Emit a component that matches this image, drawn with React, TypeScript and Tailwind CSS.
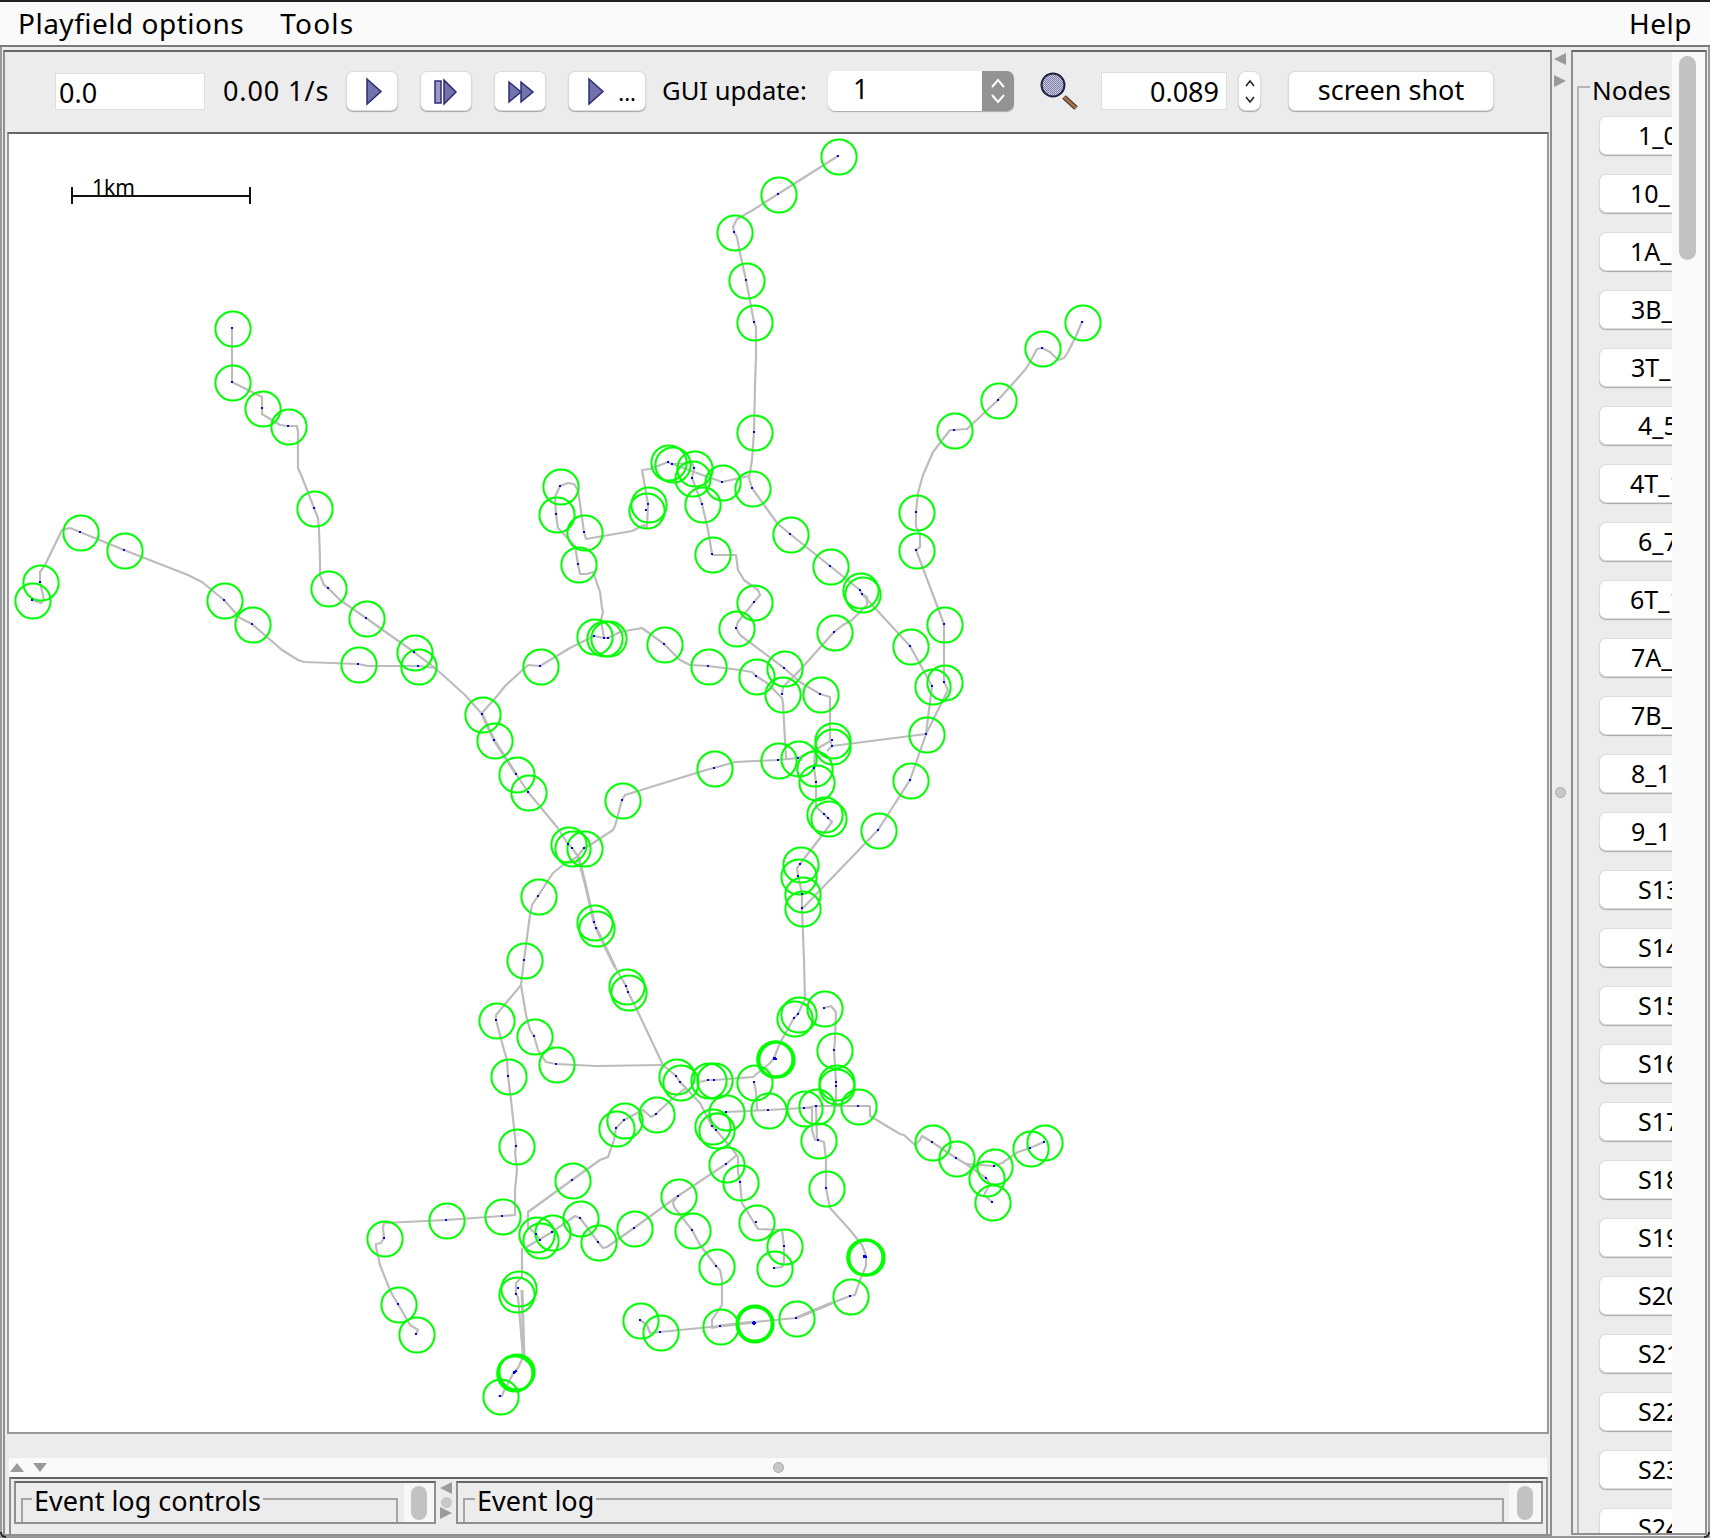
import React from "react";

const FONT = { fontFamily: '"Noto Sans", "Open Sans", sans-serif' } as const;

const nodes: [number, number][] = [
  [838,156],[778,194],[734,232],[746,280],[754,322],[754,432],[752,488],[722,482],[694,468],[692,478],[702,504],
  [916,512],[954,430],[998,400],[1042,348],[1082,322],[560,486],[556,514],[584,532],[578,564],[648,504],[646,510],
  [668,462],[672,464],[790,534],[830,566],[860,590],[862,594],[916,550],[712,554],[754,602],[736,628],[594,636],
  [604,638],[608,638],[540,666],[664,644],[708,666],[756,676],[784,668],[782,694],[820,694],[834,632],[910,646],
  [944,624],[932,686],[944,682],[926,734],[482,714],[494,740],[714,768],[778,760],[798,758],[832,740],[832,746],
  [814,768],[816,782],[824,814],[828,818],[910,780],[878,830],[800,864],[798,876],[802,894],[802,908],
  [232,328],[232,382],[262,408],[288,426],[314,508],[328,588],[366,618],[414,652],[418,666],[358,664],[80,532],
  [124,550],[40,582],[32,600],[224,600],[252,624],[516,774],[528,792],[568,844],[572,848],[584,848],[622,800],
  [538,896],[524,960],[594,922],[596,928],[626,986],[628,992],[496,1020],[534,1036],[556,1064],[508,1076],
  [676,1076],[680,1082],[708,1080],[714,1080],[754,1082],[774,1058],[775,1058],[774,1059],[776,1059],[794,1018],[798,1014],
  [824,1008],[834,1050],[836,1082],[836,1086],[858,1106],[816,1106],[804,1108],[768,1110],[726,1112],[712,1126],
  [716,1130],[818,1140],[656,1114],[624,1120],[616,1128],[516,1146],[572,1180],[726,1164],[740,1182],[678,1196],
  [826,1188],[502,1216],[580,1218],[552,1232],[536,1234],[540,1240],[598,1242],[634,1228],[692,1230],[756,1222],
  [784,1246],[774,1268],[716,1266],[864,1256],[865,1256],[864,1257],[866,1257],[518,1288],[516,1294],[850,1296],[446,1220],[384,1238],
  [398,1304],[416,1334],[514,1372],[515,1372],[514,1373],[516,1371],[500,1396],[640,1320],[660,1332],[720,1326],[754,1322],[755,1323],
  [754,1324],[753,1323],[796,1318],[932,1142],[956,1158],[994,1166],[986,1178],[992,1202],[1030,1148],[1044,1142],
];

const paths: number[][] = [
  [838,156,778,194,753,210,737,219,733,227,734,232,737,237,740,253,746,280,754,322,756,327,756,357,755,385,754,432,752,460,749,478,752,488,777,523,790,534,830,566,860,590,862,594,910,646,932,686,926,734],
  [1082,322,1076,336,1068,352,1064,358,1058,360,1050,352,1042,348,1037,349,1030,362,1025,370,998,400,967,429,954,430,950,430,933,452,923,475,918,493,916,512,916,527,920,533,920,547,916,550,944,624,944,682,948,690,926,734,910,780,878,830,803,908],
  [232,328,232,382,258,395,262,397,262,414,280,425,288,426,297,426,298,432,298,468,302,477,314,508,318,518,319,530,320,560,320,575,324,585,328,588,340,600,366,618,380,628,414,652,435,668,465,695,482,714,494,740,516,774,528,792,557,827,568,844,572,848,577,855,585,883,594,922,596,928,615,967,626,986,628,992,637,1010,663,1065,676,1076,680,1082,700,1103,712,1126,716,1130,733,1150,738,1157,738,1173,740,1182,742,1203,758,1229,782,1230,784,1246,784,1262,782,1267,774,1268],
  [80,532,70,528,62,530,45,565,40,572,40,582,44,600,41,603,32,600],
  [80,532,124,550,188,575,202,582,224,600,240,618,252,624,282,650,298,660,304,662,358,664,368,666,418,666,436,668],
  [560,486,568,483,574,484,578,490,584,532,586,539,632,531,644,525,647,527,648,504,642,470,650,469,668,462,672,464,692,463,694,468,692,478,702,504,708,530,712,554,713,555,736,555,738,570,744,580,758,590,760,595,754,602,738,622,736,628,740,635,784,668,800,682,820,694,830,697,830,740,832,746,827,751],
  [560,486,555,497,556,514,558,528,575,546,578,564,580,574,587,574,593,572,600,592,602,608,603,612,601,620,604,638],
  [672,464,722,482],
  [722,482,749,476],
  [481,714,498,695,505,686,528,665,540,666,570,648,594,636,604,638,608,638,620,632,642,628,664,644,680,660,690,665,708,666,740,670,752,672,756,676,767,683,782,698,783,703,786,758],
  [622,800,625,795,706,770,714,768,735,762,778,760,798,758,815,750,832,740],
  [832,746,926,734],
  [815,750,814,768,816,782,816,807,824,814,828,818,832,822,820,838,800,864,797,868,798,876,800,884,802,894,802,908,804,960,805,1000,803,1003],
  [862,594,867,597,867,605,852,620,843,625,834,632,800,670,783,687,782,694],
  [622,800,615,826,613,830,590,845,584,848,577,857,563,865,553,873,538,896,532,905,530,915,528,930,524,960,521,985,496,1015,496,1020,504,1050,507,1060,508,1076,511,1100,516,1146,515,1152,517,1170,515,1190,515,1215,502,1216,446,1220,384,1223,383,1228,384,1238,381,1243,376,1244,376,1247,380,1265,390,1290,393,1296,398,1304,410,1325,418,1330,416,1334],
  [521,985,526,1015,530,1030,534,1036,538,1050,546,1062,556,1064,596,1066,663,1065],
  [522,1248,522,1277,516,1283,516,1294,518,1297,520,1320,523,1357,518,1368,514,1372,503,1393,502,1396,498,1396],
  [525,1248,552,1232,575,1216,580,1218,598,1242,603,1248,607,1247,634,1228,678,1196,726,1164,737,1155],
  [616,1128,614,1140,608,1157,600,1160,572,1180,528,1212,528,1227,536,1234,540,1240],
  [616,1128,624,1120,643,1110,651,1117,656,1114,673,1098,686,1088,680,1082],
  [700,1082,708,1080,714,1080,753,1077,770,1063,774,1058,780,1043,794,1018,798,1014,803,1003],
  [824,1008,831,1006,836,1012,835,1040,834,1050,836,1082,836,1086,836,1105],
  [726,1112,768,1110,804,1108,816,1106,858,1106,870,1106,870,1116,880,1122,900,1134,904,1135,915,1145,920,1140,922,1136,932,1142,956,1158,966,1164,986,1178,990,1184,984,1195,992,1202],
  [966,1164,994,1166,1002,1163,1018,1152,1030,1148,1044,1142],
  [726,1112,712,1114,710,1118,712,1126],
  [754,1082,756,1092,757,1110],
  [804,1108,812,1108,812,1130,815,1140,818,1140,824,1142,826,1160,826,1188,830,1208,850,1230,862,1245,866,1255,866,1266,860,1280,855,1295,850,1296,832,1303,796,1318,754,1322,720,1326,660,1332,650,1333,647,1325,640,1320],
  [816,1106,817,1140],
  [720,1326,712,1328,712,1320,722,1305,722,1280,720,1270,716,1266,700,1245,692,1230,674,1207,673,1202,678,1196],
];

const thick: number[][] = [
  [578,855,585,883,594,922],
  [596,928,615,967],
  [482,714,494,740,516,774],
  [522,1290,524,1357],
  [754,1322,720,1326],
  [796,1318,832,1303],
];

const nodeLabels: [string, string][] = [
  ["1_0", "pl-[38px]"],["10_1", "pl-[30px]"],["1A_1", "pl-[30px]"],["3B_1", "pl-[31px]"],["3T_1", "pl-[31px]"],
  ["4_5", "pl-[38px]"],["4T_1", "pl-[30px]"],["6_7", "pl-[38px]"],["6T_1", "pl-[30px]"],["7A_1", "pl-[31px]"],
  ["7B_1", "pl-[31px]"],["8_1", "pl-[31px]"],["9_1", "pl-[31px]"],["S13", "pl-[38px]"],["S14", "pl-[38px]"],
  ["S15", "pl-[38px]"],["S16", "pl-[38px]"],["S17", "pl-[38px]"],["S18", "pl-[38px]"],["S19", "pl-[38px]"],
  ["S20", "pl-[38px]"],["S21", "pl-[38px]"],["S22", "pl-[38px]"],["S23", "pl-[38px]"],["S24", "pl-[38px]"],
];

function Tri({ x, y = 6, w = 14, h = 25 }: { x: number; y?: number; w?: number; h?: number }) {
  return <polygon points={`${x},${y} ${x + w},${y + h / 2} ${x},${y + h}`} fill="#7272ad" stroke="#2c2c70" strokeWidth="1.5" />;
}

function ToolBtn({ className, children }: { className: string; children: React.ReactNode }) {
  return (
    <button className={`shrink-0 h-[40px] bg-white rounded-[7px] border border-[#dcdcdc] shadow-[0_1px_1px_#a8a8a8] relative ${className}`}>
      {children}
    </button>
  );
}

function Network() {
  return (
    <svg viewBox="9 134 1538 1298" className="block w-[1538px] h-[1298px]">
      {paths.map((p, i) => (
        <polyline key={i} points={p.join(" ")} fill="none" stroke="#bcbcbc" strokeWidth="2.2" strokeLinejoin="round" />
      ))}
      {thick.map((p, i) => (
        <polyline key={i} points={p.join(" ")} fill="none" stroke="#bcbcbc" strokeWidth="3" />
      ))}
      {nodes.map(([x, y], i) => (
        <circle key={i} cx={x + 1} cy={y + 1} r="17.6" fill="none" stroke="#00ff00" strokeWidth="2" />
      ))}
      {nodes.map(([x, y], i) => (
        <rect key={i} x={x - 1} y={y - 1} width="2" height="2" fill="#0000ee" />
      ))}
      <path d="M72 196H250M72 187V204M250 187V204" stroke="#111" strokeWidth="2" fill="none" shapeRendering="crispEdges" />
    </svg>
  );
}

function Titled({ title, lineEnd, thumb, titleLeft }: { title: string; lineEnd: string; thumb: string; titleLeft: string }) {
  return (
    <div className="h-full flex border-2 border-[#8f8f8f] border-t-[#666]">
      <div className="flex-1 min-w-0 pl-[5px] pt-[15px] overflow-hidden">
        <div className={`relative h-[40px] border-l-2 border-t-2 border-r-2 border-[#a5a5a5] ${lineEnd}`}>
          <span className={`absolute top-[-15px] bg-[#ececec] px-[2px] text-[27px] leading-[32px] text-black whitespace-nowrap ${titleLeft}`}>{title}</span>
        </div>
      </div>
      <div className={`shrink-0 h-full bg-[#f7f7f7] flex justify-center pt-[3px] ${thumb}`}>
        <div className="w-[16px] h-[34px] rounded-full bg-[#c2c2c2]" />
      </div>
    </div>
  );
}

export default function App() {
  return (
    <div style={FONT} className="relative w-[1710px] h-[1538px] overflow-hidden bg-[#ececec] flex flex-col border-t-2 border-[#222]">
      <div className="h-[45px] shrink-0 bg-[#fafafa] border-b-2 border-[#7a7a7a] flex items-center pl-[18px] pr-[18px] pb-[2px] text-[28px] tracking-[0.5px] text-black">
        <span className="mr-[36px]">Playfield options</span>
        <span className="tracking-[1.2px]">Tools</span>
        <span className="ml-auto">Help</span>
      </div>
      <div className="flex-1 min-h-0 flex pt-[3px] border-l-2 border-r-2 border-b-2 border-[#999]">
        <div className="w-[1549px] shrink-0 ml-[1px] flex flex-col border-l-2 border-t-2 border-b-2 border-r-2 border-[#8f8f8f] border-t-[#666]">
          <div className="h-[80px] shrink-0 flex items-center pl-[50px] pb-[2px] text-[27px] text-black">
            <div className="w-[150px] h-[37px] shrink-0 bg-white border border-[#dedede] pl-[3px] leading-[37px]">0.0</div>
            <span className="ml-[18px] w-[123px] shrink-0 whitespace-nowrap tracking-[0.9px]">0.00 1/s</span>
            <ToolBtn className="w-[52px]">
              <svg viewBox="0 0 52 40" className="absolute inset-0 w-[52px] h-[40px]"><Tri x={20} y={7} /></svg>
            </ToolBtn>
            <ToolBtn className="w-[52px] ml-[22px]">
              <svg viewBox="0 0 52 40" className="absolute inset-0 w-[52px] h-[40px]">
                <rect x="14" y="9" width="6" height="22" fill="#9a9ac8" stroke="#2c2c70" strokeWidth="1.5" />
                <Tri x={23} y={8} w={12} h={24} />
              </svg>
            </ToolBtn>
            <ToolBtn className="w-[52px] ml-[22px]">
              <svg viewBox="0 0 52 40" className="absolute inset-0 w-[52px] h-[40px]">
                <Tri x={14} y={10} w={12} h={20} />
                <Tri x={26} y={10} w={12} h={20} />
              </svg>
            </ToolBtn>
            <ToolBtn className="w-[78px] ml-[22px]">
              <svg viewBox="0 0 78 40" className="absolute inset-0 w-[78px] h-[40px]"><Tri x={20} y={7} /></svg>
              <span className="absolute right-[9px] top-[1px] text-[22px] leading-[38px]">...</span>
            </ToolBtn>
            <span className="ml-[16px] w-[166px] shrink-0 whitespace-nowrap text-[25.6px]">GUI update:</span>
            <div className="w-[186px] h-[40px] shrink-0 rounded-[7px] overflow-hidden flex bg-white shadow-[0_1px_1px_#a8a8a8]">
              <span className="flex-1 pl-[25px] leading-[36px]">1</span>
              <div className="w-[32px] bg-[#939393] flex items-center justify-center">
                <svg viewBox="0 0 16 28" className="w-[16px] h-[28px]"><path d="M2 10L8 3L14 10M2 18L8 25L14 18" stroke="#fff" strokeWidth="2" fill="none" /></svg>
              </div>
            </div>
            <svg viewBox="0 0 38 38" className="w-[38px] h-[38px] ml-[26px] shrink-0">
              <defs>
                <pattern id="lens" width="2" height="2" patternUnits="userSpaceOnUse">
                  <rect width="2" height="2" fill="#c6c6de" />
                  <rect width="1" height="1" fill="#8080a8" />
                  <rect x="1" y="1" width="1" height="1" fill="#8080a8" />
                </pattern>
              </defs>
              <line x1="24" y1="25" x2="36" y2="36" stroke="#3a2a20" strokeWidth="5" />
              <line x1="24" y1="25" x2="36" y2="36" stroke="#a87348" strokeWidth="3" />
              <circle cx="13" cy="13" r="11.5" fill="url(#lens)" stroke="#20203e" strokeWidth="2" />
            </svg>
            <div className="w-[126px] h-[38px] ml-[23px] shrink-0 bg-white border border-[#dedede] text-right pr-[7px] leading-[38px]">0.089</div>
            <div className="w-[23px] h-[40px] ml-[11px] shrink-0 rounded-[8px] bg-white border border-[#dcdcdc] shadow-[0_1px_1px_#a8a8a8] flex items-center justify-center">
              <svg viewBox="0 0 12 30" className="w-[12px] h-[30px]"><path d="M2 10L6 5L10 10M2 21L6 26L10 21" stroke="#222" strokeWidth="1.6" fill="none" /></svg>
            </div>
            <ToolBtn className="w-[206px] ml-[27px] text-[27px] leading-[34px] pb-[3px]">screen shot</ToolBtn>
          </div>
          <div className="ml-[2px] w-[1542px] h-[1302px] shrink-0 relative bg-white border-2 border-[#999] border-t-[#666]">
            <Network />
            <span className="absolute left-[83px] top-[40px] text-[21px] leading-[26px] text-black">1km</span>
          </div>
          <div className="h-[24px] shrink-0" />
          <div className="ml-[4px] w-[1538px] h-[19px] shrink-0 bg-[#fafafa] relative flex items-center gap-[9px] pl-[1px]">
            <svg viewBox="0 0 14 9" className="w-[14px] h-[9px]"><polygon points="0,9 7,0 14,9" fill="#9a9a9a" /></svg>
            <svg viewBox="0 0 14 9" className="w-[14px] h-[9px]"><polygon points="0,0 7,9 14,0" fill="#9a9a9a" /></svg>
            <div className="absolute left-[764px] top-[4px] w-[11px] h-[11px] rounded-full bg-[#c8c8c8] border border-[#aaa]" />
          </div>
          <div className="ml-[4px] w-[1539px] flex-1 min-h-0 border-t-2 border-[#666] border-l-2 border-l-[#8f8f8f] border-r-2 border-r-[#8f8f8f] pl-[3px] pr-[3px] pt-[2px] flex">
            <div className="w-[422px] h-[43px] shrink-0">
              <Titled title="Event log controls" lineEnd="w-[377px]" thumb="w-[30px]" titleLeft="left-[9px]" />
            </div>
            <div className="w-[20px] shrink-0 flex flex-col items-center pt-[1px]">
              <svg viewBox="0 0 12 12" className="w-[12px] h-[12px]"><polygon points="12,0 0,6 12,12" fill="#9a9a9a" /></svg>
              <div className="w-[11px] h-[11px] mt-[3px] rounded-full bg-[#c8c8c8]" />
              <svg viewBox="0 0 12 12" className="w-[12px] h-[12px] mt-[-1px]"><polygon points="0,0 12,6 0,12" fill="#9a9a9a" /></svg>
            </div>
            <div className="flex-1 min-w-0 h-[43px]">
              <Titled title="Event log" lineEnd="w-[1041px]" thumb="w-[32px]" titleLeft="left-[10px]" />
            </div>
          </div>
        </div>
        <div className="w-[19px] shrink-0 relative">
          <div className="flex flex-col items-center gap-[10px] pt-[3px] pr-[4px]">
            <svg viewBox="0 0 12 12" className="w-[12px] h-[12px]"><polygon points="12,0 0,6 12,12" fill="#9a9a9a" /></svg>
            <svg viewBox="0 0 12 12" className="w-[12px] h-[12px]"><polygon points="0,0 12,6 0,12" fill="#9a9a9a" /></svg>
          </div>
          <div className="absolute left-[3px] top-[737px] w-[11px] h-[11px] rounded-full bg-[#c8c8c8] border border-[#aaa]" />
        </div>
        <div className="w-[136px] shrink-0 mb-[1px] flex border-2 border-[#8f8f8f] border-t-[#666]">
          <div className="w-[99px] shrink-0 overflow-hidden pl-[4px] pt-[34px]">
            <div className="relative h-[1600px] w-[140px] border-l-2 border-t-2 border-[#b5b5b5] pl-[20px] pt-[28px] flex flex-col gap-[19px]">
              <span className="absolute left-[11px] top-[-15px] bg-[#ececec] px-[2px] text-[26px] leading-[34px] text-black">Nodes</span>
              {nodeLabels.map(([label, pad]) => (
                <div key={label} className={`w-[110px] h-[39px] shrink-0 bg-white rounded-[7px] border border-[#dcdcdc] shadow-[0_1px_1px_#a8a8a8] text-[25px] leading-[36px] text-black whitespace-nowrap ${pad}`}>
                  {label}
                </div>
              ))}
            </div>
          </div>
          <div className="flex-1 bg-[#f9f9f9] flex justify-center pt-[4px] pr-[3px]">
            <div className="w-[17px] h-[204px] rounded-full bg-[#c2c2c2]" />
          </div>
        </div>
      </div>
      <div className="absolute left-0 bottom-0 w-[6px] h-[6px] rounded-bl-[6px] border-l-2 border-b-2 border-[#222]" />
      <div className="absolute right-0 bottom-0 w-[6px] h-[6px] rounded-br-[6px] border-r-2 border-b-2 border-[#222]" />
    </div>
  );
}
